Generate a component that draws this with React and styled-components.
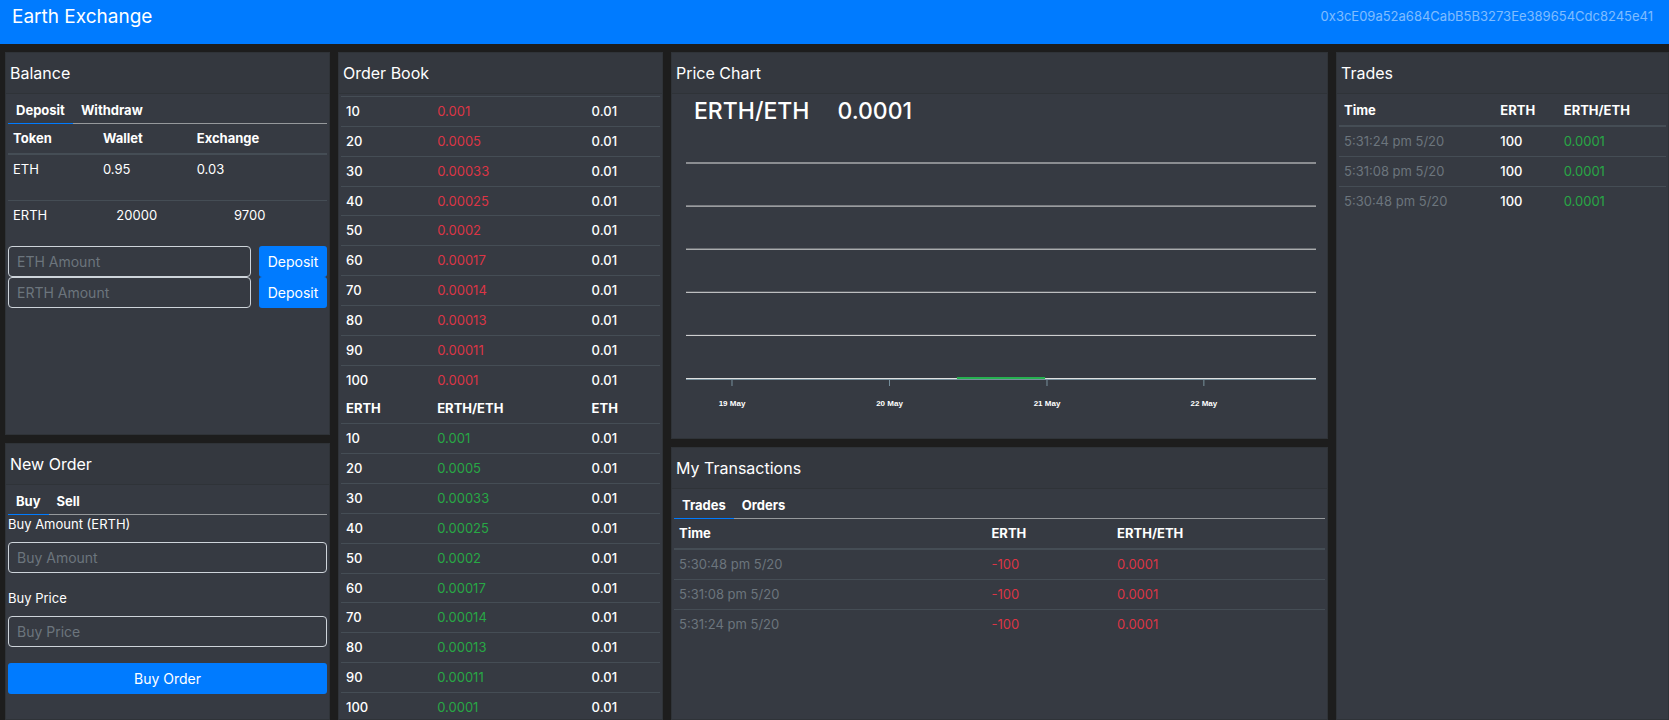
import React, { useState } from "react";
import styled, { createGlobalStyle } from "styled-components";

const colors = {
  primary: "#007bff",
  page: "#1d1d1d",
  card: "#363a42",
  cardHead: "#34383f",
  cardLine: "#2f3338",
  line: "#454d55",
  red: "#dc3545",
  green: "#28a745",
  muted: "#6c757d",
  light: "#ced4da",
};

const GlobalStyle = createGlobalStyle`
  *, *::before, *::after { box-sizing: border-box; }
  body {
    margin: 0;
    background: ${colors.page};
    color: #fff;
    font-family: Inter, "Liberation Sans", sans-serif;
    font-size: 13px;
    line-height: 1.45;
  }
`;

const Page = styled.div`
  display: flex;
  flex-direction: column;
  height: 100vh;
`;

const Navbar = styled.nav`
  display: flex;
  justify-content: space-between;
  flex: none;
  height: 44px;
  padding: 3px 16px 0 12px;
  background: ${colors.primary};
`;

const Brand = styled.a`
  color: #fff;
  font-size: 19px;
  text-decoration: none;
`;

const Account = styled.a`
  padding-top: 4px;
  color: rgba(255, 255, 255, 0.5);
  text-decoration: none;
`;

const Content = styled.main`
  display: grid;
  grid-template-columns: 325fr 325fr 657fr 333fr;
  gap: 8px;
  flex: 1;
  min-height: 0;
  padding: 8px 0 0 5px;
`;

const Column = styled.div`
  display: grid;
  grid-template-rows: ${(p) => p.$rows || "minmax(0, 1fr)"};
  gap: 8px;
  min-width: 0;
  min-height: 0;
`;

const Card = styled.section`
  display: flex;
  flex-direction: column;
  min-width: 0;
  min-height: 0;
  border: 1px solid ${colors.cardLine};
  background: ${colors.card};
`;

const CardHeader = styled.h2`
  flex: none;
  height: 41px;
  margin: 0;
  padding: 0 4px;
  border-bottom: 1px solid ${colors.cardLine};
  background: ${colors.cardHead};
  font-size: 16px;
  font-weight: 400;
  line-height: 40px;
`;

const CardBody = styled.div`
  flex: 1;
  min-height: 0;
  padding: ${(p) => (p.$inset ? "2px" : "0 2px")};
  overflow-y: auto;
  scrollbar-width: none;
`;

const TabList = styled.div`
  display: flex;
  height: 30px;
  border-bottom: 1px solid #96999c;
`;

const Tab = styled.button`
  height: 30px;
  padding: 4px 8px 0;
  border: 0;
  border-bottom: 1px solid ${(p) => (p.$active ? colors.primary : "#96999c")};
  background: none;
  color: #fff;
  font: inherit;
  font-weight: 700;
`;

const Table = styled.table`
  width: 100%;
  margin-bottom: 16px;
  border-collapse: collapse;
  table-layout: fixed;
`;

const HeadCell = styled.th`
  padding: 5px;
  border-bottom: ${(p) => (p.$thin ? 0 : 2)}px solid ${colors.line};
  font-weight: 700;
  text-align: left;
`;

const Cell = styled.td`
  padding: 5px;
  border-top: 1px solid ${colors.line};
  color: ${(p) => colors[p.$tone] || "#fff"};
  font-weight: ${(p) => (p.$strong ? 500 : 400)};
`;

const AmountForm = styled.form`
  display: flex;
  gap: 8px;
`;

const TextInput = styled.input`
  width: 100%;
  min-width: 0;
  height: 31px;
  padding: 4px 8px;
  border: 1px solid ${colors.light};
  border-radius: 4px;
  background: transparent;
  color: #fff;
  font-family: inherit;
  font-size: 14px;
  &::placeholder { color: ${colors.muted}; opacity: 1; }
`;

const Button = styled.button`
  flex: none;
  width: ${(p) => (p.$block ? "100%" : "68px")};
  height: 31px;
  padding: 0;
  border: 0;
  border-radius: 3px;
  background: ${colors.primary};
  color: #fff;
  font-family: inherit;
  font-size: 14px;
`;

const Field = styled.div`
  display: grid;
  gap: 8px;
  margin-bottom: 16px;
`;

const Label = styled.label`
  line-height: 19px;
`;

const PriceTitle = styled.h3`
  display: flex;
  gap: 28px;
  margin: 0;
  padding: 0 20px;
  font-size: 23px;
  font-weight: 500;
  line-height: 34px;
`;

const ChartBox = styled.div`
  padding: 28px 9px 0 12px;
`;

const ChartSvg = styled.svg`
  display: block;
  width: 100%;
  height: 260px;
  overflow: visible;
`;

const ChartLabel = styled.text`
  fill: #fff;
  font: bold 8px "Liberation Sans", sans-serif;
  text-anchor: middle;
`;

const DataTable = ({ label, widths, heads, rows, strong }) => (
  <Table aria-label={label}>
    <colgroup>
      {widths.map((w, i) => (
        <col key={i} width={w} />
      ))}
    </colgroup>
    {heads && (
      <thead>
        <tr>
          {heads.map((h) => (
            <HeadCell key={h} scope="col">{h}</HeadCell>
          ))}
        </tr>
      </thead>
    )}
    <tbody>
      {rows.map((row, i) => (
        <tr key={i}>
          {row.map(([value, tone], j) => (
            <Cell key={j} $tone={tone} $strong={strong && !tone}>{value}</Cell>
          ))}
        </tr>
      ))}
    </tbody>
  </Table>
);

const Tabs = ({ label, items }) => {
  const [active, setActive] = useState(items[0]);
  return (
    <TabList role="tablist" aria-label={label}>
      {items.map((item) => (
        <Tab
          key={item}
          type="button"
          role="tab"
          aria-selected={item === active}
          $active={item === active}
          onClick={() => setActive(item)}
        >
          {item}
        </Tab>
      ))}
    </TabList>
  );
};

const levels = [
  [10, "0.001"],
  [20, "0.0005"],
  [30, "0.00033"],
  [40, "0.00025"],
  [50, "0.0002"],
  [60, "0.00017"],
  [70, "0.00014"],
  [80, "0.00013"],
  [90, "0.00011"],
  [100, "0.0001"],
];

const OrderRows = ({ tone }) => (
  <tbody>
    {levels.map(([amount, price]) => (
      <tr key={amount}>
        <Cell $strong>{amount}</Cell>
        <Cell $tone={tone}>{price}</Cell>
        <Cell $strong>0.01</Cell>
      </tr>
    ))}
  </tbody>
);

const OrderBook = () => (
  <Table aria-label="Order Book">
    <colgroup>
      <col width="28.6%" />
      <col width="48.4%" />
      <col />
    </colgroup>
    <OrderRows tone="red" />
    <tbody>
      <tr>
        <HeadCell scope="col" $thin>ERTH</HeadCell>
        <HeadCell scope="col" $thin>ERTH/ETH</HeadCell>
        <HeadCell scope="col" $thin>ETH</HeadCell>
      </tr>
    </tbody>
    <OrderRows tone="green" />
  </Table>
);

const days = [
  ["7.3%", "19 May"],
  ["32.3%", "20 May"],
  ["57.3%", "21 May"],
  ["82.2%", "22 May"],
];

const PriceChart = () => (
  <ChartBox>
    <ChartSvg role="img" aria-label="ERTH/ETH price by day">
      {[7, 50.1, 93.2, 136.3, 179.4, 222.5].map((y) => (
        <line key={y} x1="0" x2="100%" y1={y} y2={y} stroke="#e0e0e0" strokeWidth="1" />
      ))}
      <line x1="0" x2="100%" y1="223.5" y2="223.5" stroke="#78909c" strokeWidth="1" />
      <line x1="43%" x2="57%" y1="222" y2="222" stroke="#26b050" strokeWidth="2" />
      {days.map(([x, day]) => (
        <React.Fragment key={day}>
          <line x1={x} x2={x} y1="224" y2="230" stroke="#78909c" strokeWidth="1" />
          <ChartLabel x={x} y="250">{day}</ChartLabel>
        </React.Fragment>
      ))}
    </ChartSvg>
  </ChartBox>
);

const AmountRow = ({ token }) => (
  <AmountForm onSubmit={(e) => e.preventDefault()}>
    <TextInput type="text" placeholder={`${token} Amount`} aria-label={`${token} Amount`} />
    <Button type="submit">Deposit</Button>
  </AmountForm>
);

export default function App() {
  return (
    <>
      <GlobalStyle />
      <Page>
        <Navbar>
          <Brand href="#">Earth Exchange</Brand>
          <Account href="#">0x3cE09a52a684CabB5B3273Ee389654Cdc8245e41</Account>
        </Navbar>
        <Content>
          <Column $rows="minmax(0, 383fr) minmax(0, 277fr)">
            <Card>
              <CardHeader>Balance</CardHeader>
              <CardBody>
                <Tabs label="Balance" items={["Deposit", "Withdraw"]} />
                <DataTable
                  label="ETH balance"
                  widths={["28.2%", "29.4%", undefined]}
                  heads={["Token", "Wallet", "Exchange"]}
                  rows={[[["ETH"], ["0.95"], ["0.03"]]]}
                />
                <DataTable
                  label="ERTH balance"
                  widths={["32.4%", "36.9%", undefined]}
                  rows={[[["ERTH"], ["20000"], ["9700"]]]}
                />
                <AmountRow token="ETH" />
                <AmountRow token="ERTH" />
              </CardBody>
            </Card>
            <Card>
              <CardHeader>New Order</CardHeader>
              <CardBody>
                <Tabs label="New Order" items={["Buy", "Sell"]} />
                <form onSubmit={(e) => e.preventDefault()}>
                  <Field>
                    <Label htmlFor="buy-amount">Buy Amount (ERTH)</Label>
                    <TextInput id="buy-amount" type="text" placeholder="Buy Amount" />
                  </Field>
                  <Field>
                    <Label htmlFor="buy-price">Buy Price</Label>
                    <TextInput id="buy-price" type="text" placeholder="Buy Price" />
                  </Field>
                  <Button type="submit" $block>Buy Order</Button>
                </form>
              </CardBody>
            </Card>
          </Column>
          <Column>
            <Card>
              <CardHeader>Order Book</CardHeader>
              <CardBody $inset>
                <OrderBook />
              </CardBody>
            </Card>
          </Column>
          <Column $rows="minmax(0, 387fr) minmax(0, 273fr)">
            <Card>
              <CardHeader>Price Chart</CardHeader>
              <CardBody>
                <PriceTitle>
                  <span>ERTH/ETH</span>
                  <span>0.0001</span>
                </PriceTitle>
                <PriceChart />
              </CardBody>
            </Card>
            <Card>
              <CardHeader>My Transactions</CardHeader>
              <CardBody>
                <Tabs label="My Transactions" items={["Trades", "Orders"]} />
                <DataTable
                  label="My trades"
                  widths={["48%", "19.3%", undefined]}
                  heads={["Time", "ERTH", "ERTH/ETH"]}
                  rows={["5:30:48 pm 5/20", "5:31:08 pm 5/20", "5:31:24 pm 5/20"].map((t) => [
                    [t, "muted"],
                    ["-100", "red"],
                    ["0.0001", "red"],
                  ])}
                />
              </CardBody>
            </Card>
          </Column>
          <Column>
            <Card>
              <CardHeader>Trades</CardHeader>
              <CardBody $inset>
                <DataTable
                  label="Trades"
                  strong
                  widths={["47.8%", "19.4%", undefined]}
                  heads={["Time", "ERTH", "ERTH/ETH"]}
                  rows={["5:31:24 pm 5/20", "5:31:08 pm 5/20", "5:30:48 pm 5/20"].map((t) => [
                    [t, "muted"],
                    ["100"],
                    ["0.0001", "green"],
                  ])}
                />
              </CardBody>
            </Card>
          </Column>
        </Content>
      </Page>
    </>
  );
}
